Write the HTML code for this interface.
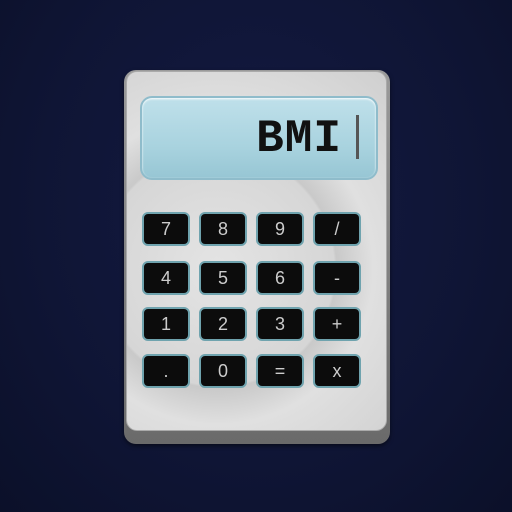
<!DOCTYPE html>
<html><head><style>
body{margin:0;width:512px;height:512px;overflow:hidden;background:radial-gradient(ellipse at 50% 40%,#141a42 0%,#0f1535 60%,#0b1029 100%);position:relative;font-family:"Liberation Sans",sans-serif}
.body{position:absolute;left:124px;top:70px;width:266px;height:374px;border-radius:12px;background:linear-gradient(#9a9a9a,#6a6a6a);box-shadow:0 2px 4px rgba(0,0,0,.5)}
.face{position:absolute;left:126px;top:71px;width:261px;height:360px;border-radius:11px;background:radial-gradient(circle at 35% 55%,#e4e4e4 0%,#d6d6d6 45%,#c9c9c9 46%,#e0e0e0 60%,#cfcfcf 100%);border:1px solid #aaa;box-sizing:border-box}
.disp{position:absolute;left:140px;top:96px;width:238px;height:84px;border-radius:12px;background:linear-gradient(#bfe0ea,#a9d3df 60%,#97c6d4);border:2px solid #8fbccb;box-sizing:border-box;box-shadow:inset 0 1px 2px #fff}
.disp span{position:absolute;right:34px;top:15px;font-family:"Liberation Mono",monospace;font-weight:bold;font-size:46px;color:#111;letter-spacing:1px}
.cur{position:absolute;left:356px;top:115px;width:3px;height:44px;background:#555}
.k{position:absolute;width:48px;height:34px;border-radius:6px;background:#0c0c0c;border:2px solid #6fa3ae;box-sizing:border-box;color:#ccc;font-size:18px;text-align:center;line-height:30px}
</style></head><body>
<div class="body"></div>
<div class="face"></div>
<div class="disp"><span>BMI</span></div>
<div class="cur"></div>
<div class="k" style="left:142px;top:212px">7</div>
<div class="k" style="left:199px;top:212px">8</div>
<div class="k" style="left:256px;top:212px">9</div>
<div class="k" style="left:313px;top:212px">/</div>
<div class="k" style="left:142px;top:261px">4</div>
<div class="k" style="left:199px;top:261px">5</div>
<div class="k" style="left:256px;top:261px">6</div>
<div class="k" style="left:313px;top:261px">-</div>
<div class="k" style="left:142px;top:307px">1</div>
<div class="k" style="left:199px;top:307px">2</div>
<div class="k" style="left:256px;top:307px">3</div>
<div class="k" style="left:313px;top:307px">+</div>
<div class="k" style="left:142px;top:354px">.</div>
<div class="k" style="left:199px;top:354px">0</div>
<div class="k" style="left:256px;top:354px">=</div>
<div class="k" style="left:313px;top:354px">x</div>
</body></html>
